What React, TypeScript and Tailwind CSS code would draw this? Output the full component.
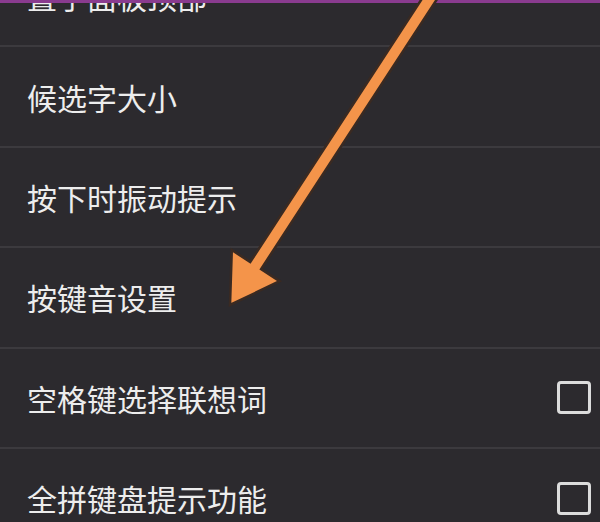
import React from "react"

const rows = [
  { label: "置于面板顶部", check: false },
  { label: "候选字大小", check: false },
  { label: "按下时振动提示", check: false },
  { label: "按键音设置", check: false },
  { label: "空格键选择联想词", check: true },
  { label: "全拼键盘提示功能", check: true },
]

function Arrow() {
  return (
    <svg className="absolute inset-0 pointer-events-none" width="600" height="522" viewBox="0 0 600 522">
      <polygon
        points="429.9,-13.5 440.7,-6.5 261.1,269.1 279.6,281.2 230,305 231.8,250 250.2,262.1"
        fill="#f4944a"
        stroke="#3a2a22"
        strokeWidth="2.5"
        strokeLinejoin="miter"
      />
    </svg>
  )
}

export default function App() {
  return (
    <div
      className="relative w-[600px] h-[522px] overflow-hidden bg-[#2c2a2e] text-[#ededed]"
      style={{ fontFamily: '"Noto Sans CJK SC", "Noto Sans", sans-serif' }}
    >
      <div className="-mt-[53px] flex flex-col">
        {rows.map((row) => (
          <div
            key={row.label}
            className="h-[100.4px] shrink-0 flex items-center justify-between pl-[27px] pr-[9px] border-b-2 border-[#3c3a3e]"
          >
            <span className="text-[30px] leading-none">{row.label}</span>
            {row.check && (
              <div className="w-[34px] h-[33px] rounded-[4px] border-[3px] border-[#dcdcdc]" />
            )}
          </div>
        ))}
      </div>
      <div className="absolute top-0 left-0 right-0 h-[3px] bg-[#8a3b8f]" />
      <Arrow />
    </div>
  )
}
